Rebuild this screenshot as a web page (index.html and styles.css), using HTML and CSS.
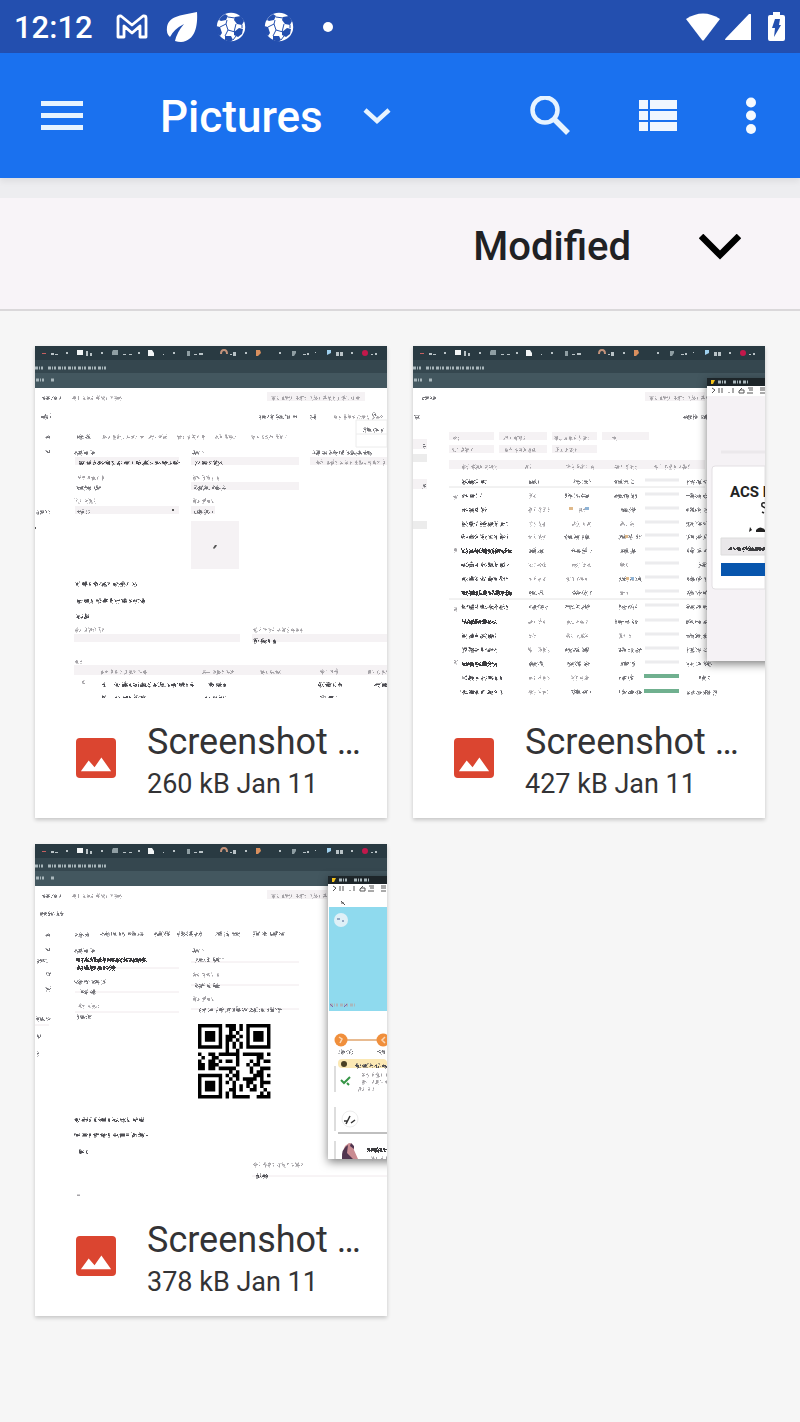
FILE: index.html
```html
<!DOCTYPE html>
<html lang="en">
<head>
    <meta charset="UTF-8">
    <meta name="viewport" content="width=device-width, initial-scale=1.0">
    <title>Pictures</title>
    <link rel="stylesheet" href="styles.css">
</head>
<body>
    <!-- Shared shapes -->
    <svg class="defs" aria-hidden="true">
        <filter id="scribble" filterUnits="userSpaceOnUse" x="0" y="0" width="352" height="352">
            <feTurbulence type="turbulence" baseFrequency="0.35" numOctaves="2" seed="4"/>
            <feDisplacementMap in="SourceGraphic" scale="4" xChannelSelector="R" yChannelSelector="G"/>
            <feOffset dx="1" dy="1"/>
        </filter>
        <symbol id="ball" viewBox="0 0 30 30">
            <circle cx="15" cy="15" r="14.2" fill="#fff"/>
            <g fill="#234faf" stroke="#234faf" stroke-width="1">
                <path stroke="none" d="M5 5l4-3 3 2-2 4-5 1-2-1zM19 5l6-1 3 5-2 4-5-1-3-4zM0 14l4 1 2 6-2 3-3-3zM18 20l5-4 4 1-1 5-4 3-4-2zM9 24l6 0 2 4-3 2-5-2z"/>
                <path fill="none" d="M11 8l-1 4-6 3M10 12l2 6 7 2M12 18l-3 6M20 12l-2 8M12 5l7 1M17 28l3-4M26 13l0 3"/>
            </g>
        </symbol>
        <symbol id="photo" viewBox="0 0 41 41">
            <rect width="41" height="41" rx="4" fill="#db4530"/>
            <path d="M5 34L13 23l6 7 7-10 10 14z" fill="#fff"/>
        </symbol>
        <symbol id="browser" viewBox="0 0 352 42">
            <rect width="352" height="42" fill="#43575f"/>
            <rect width="352" height="27" fill="#35474f"/>
            <rect width="352" height="14" fill="#293a42"/>
            <g fill="#b9c3c7">
                <path d="M16 7h3v2h-3zM20 8h3v1h-3zM31 6h2v2h-2zM51 5h2v5h-2zM55 7h2v3h-2zM66 6h2v2h-2zM88 8h3v1h-3zM94 8h3v1h-3zM103 6h2v2h-2zM128 8h1v1h-1zM138 6h2v2h-2zM159 8h3v1h-3zM164 7h4v2h-4zM195 8h2v1h-2zM198 6h3v4h-3zM210 6h2v2h-2zM244 6h2v2h-2zM268 8h3v1h-3zM272 7h2v2h-2zM280 6h1v1h-1zM301 6h3v4h-3zM305 6h3v4h-3zM316 6h2v2h-2zM336 8h2v1h-2zM340 7h2v2h-2z"/>
            </g>
            <path d="M42 4h6v5h-6zM113 4h4l2 3v3h-6z" fill="#f2f5f6"/>
            <path d="M78 4h5v5h-6v-3zM152 5h3v5h-3zM257 5h4v2l-2 3h-2z" fill="#8f9ea3"/>
            <path d="M186 8q0-4 3-4t3 4" fill="none" stroke="#c4937b" stroke-width="2"/>
            <path d="M221 4h4l1 3-3 3h-2z" fill="#d98f5e"/>
            <path d="M292 4h4v3l-4 2z" fill="#9fd0ee"/>
            <path d="M7 7h4v1h-4z" fill="#c66060"/>
            <circle cx="330" cy="7" r="3" fill="#c2184b"/>
            <path d="M0 22h8M13 22h58" class="pale"/>
            <path d="M1 34h9M16 34h4" class="pale"/>
        </symbol>
        <symbol id="phonebar" viewBox="0 0 60 18">
            <rect width="60" height="18" fill="#fff"/>
            <rect width="60" height="8" fill="#1d2529"/>
            <path d="M4 2h4l-2 4h-2z" fill="#f3c21b"/>
            <path d="M11 4h8M26 4h16" class="pale"/>
            <path d="M5 10l3 2-3 3M12 10v5M15 10v5M22 14v1M26 10v5M35 10l-3 3v2h5v-3h-4M41 10h5M42 12h4M40 15h6M53 10h5M53 12h5M53 15h5" fill="none" stroke="#555" stroke-width="1"/>
        </symbol>
    </svg>

    <header class="status-bar">
        <span class="clock">12:12</span>
        <div class="notices">
            <svg width="32" height="26" viewBox="0 0 32 26"><path d="M2 23V4q0-2 2-2h1l11 9 11-9h1q2 0 2 2v19h-6V12l-8 7-8-7v11z" fill="none" stroke="#fff" stroke-width="2.800" stroke-linejoin="round"/></svg>
            <svg width="32" height="32" viewBox="0 0 32 32"><path d="M31 1C32 15 29 30 15 31q-3 0-6-1 2-9 9-17Q8 18 4 26q-4-3-3-10C3 4 18 4 31 1z" fill="#fff"/></svg>
            <svg width="30" height="30"><use href="#ball"/></svg>
            <svg width="30" height="30"><use href="#ball"/></svg>
            <span class="more-dot"></span>
        </div>
        <div class="signals">
            <svg width="34" height="28" viewBox="0 0 34 28"><path d="M0 6Q17-5 34 6L18 27q-1 1-2 0z" fill="#fff"/></svg>
            <svg width="26" height="26" viewBox="0 0 26 26"><path d="M24 0q2-1 2 1v25H1q-2 0 0-2z" fill="#fff"/></svg>
            <svg class="battery" width="17" height="29" viewBox="0 0 17 29"><path d="M5 0h7v3h3q2 0 2 2v22q0 2-2 2H2q-2 0-2-2V5q0-2 2-2h3z" fill="#fff"/><path d="M7 7h5l-1 6h2L6 25l1-9H4z" fill="#234faf"/></svg>
        </div>
    </header>

    <nav class="toolbar">
        <button class="icon-btn" aria-label="Open menu">
            <svg width="42" height="30" viewBox="0 0 42 30"><path d="M0 2.500h42M0 14.500h42M0 26.500h42" stroke="#e6f3ff" stroke-width="5"/></svg>
        </button>
        <button class="folder">
            Pictures
            <svg width="28" height="18" viewBox="0 0 28 18"><path d="M2 2l12 11L26 2" fill="none" stroke="#e6f3ff" stroke-width="4.500"/></svg>
        </button>
        <div class="actions">
            <button class="icon-btn" aria-label="Search">
                <svg width="40" height="40" viewBox="0 0 40 40" fill="none" stroke="#e6f3ff"><circle cx="15" cy="14" r="12.500" stroke-width="4.500"/><path d="M24 23l14 14" stroke-width="5.500"/></svg>
            </button>
            <button class="icon-btn" aria-label="List view">
                <svg width="40" height="34" viewBox="0 0 40 34"><path d="M1 1h9v9H1zM12 1h27v9H12zM1 12h9v9H1zM12 12h27v9H12zM1 23h9v9H1zM12 23h27v9H12z" fill="#f0f7ff"/></svg>
            </button>
            <button class="icon-btn" aria-label="More options">
                <svg width="10" height="38" viewBox="0 0 10 38" fill="#f5faff"><circle cx="5" cy="5.500" r="5"/><circle cx="5" cy="18.500" r="5"/><circle cx="5" cy="32" r="5"/></svg>
            </button>
        </div>
    </nav>

    <div class="sort-bar">
        <button class="sort-by">Modified</button>
        <button class="icon-btn" aria-label="Sort descending">
            <svg width="42" height="26" viewBox="0 0 42 26"><path d="M2 2l19 19L40 2" fill="none" stroke="#000" stroke-width="6.500"/></svg>
        </button>
    </div>

    <main class="files">
        <a class="file" href="#file-1">
            <svg class="thumb" viewBox="0 0 352 352" aria-hidden="true">
                <rect width="352" height="352" fill="#fff"/>
                <use href="#browser" width="352" height="42"/>
                <g fill="#f5f2f4">
                    <path d="M232 46h98v9H232zM40 111h104v8H40zM156 111h108v8H156zM275 111h77v8H275zM156 136h108v8H156zM40 160h104v8H40zM156 160h24v8h-24zM156 175h48v48h-48zM39 288h166v8H39zM217 288h135v8H217zM39 319h313v10H39z"/>
                </g>
                <path d="M321 74h31v27h-31z" fill="#fff" stroke="#ececec"/>
                <path d="M321 88h31" stroke="#ececec"/>
                <g class="scribbles">
                    <path class="t-a" d="M6 50h18M4 69h11M9 89h4M9 104h4M39 89h14M38 105h20M156 105h10M0 164h12"/>
                    <path class="t-b" d="M36 50h50M66 89h40M112 89h18M141 89h28M178 89h24M215 89h35M41 130h28M156 130h26M38 153h22M156 153h20M235 50h88M38 282h29M217 282h48"/>
                    <path class="t-a" d="M222 69h38M273 69h6M335 66h4M327 82h20M276 105h58M40 140h24M158 140h30M40 164h12M158 164h18"/>
                    <path class="t-c" d="M42 115h100M158 115h28M38 236h62M40 253h68M40 269h13M217 293h22"/>
                    <path class="t-b" d="M280 115h70M38 314h10M64 324h46M166 324h30M224 324h22M284 324h18M331 324h20M45 334h4M297 69h52"/>
                    <path class="t-c" d="M66 337h2M78 337h80M172 337h18M282 337h22M338 337h13M66 350h2M78 350h32M168 350h20M284 350h18"/>
                </g>
                <path d="M178 202l2-3 2 0-1 2-2 2zM137 163h2v2h-2zM0 181h1v2H0z" fill="#555"/>
            </svg>
            <div class="info">
                <svg class="kind" width="40" height="40"><use href="#photo"/></svg>
                <div class="meta">
                    <span class="name">Screenshot …</span>
                    <span class="detail">260 kB Jan 11</span>
                </div>
            </div>
        </a>

        <a class="file" href="#file-2">
            <svg class="thumb" viewBox="0 0 352 352" aria-hidden="true">
                <rect width="352" height="352" fill="#fff"/>
                <use href="#browser" width="352" height="42"/>
                <g fill="#f5f2f4">
                    <path d="M232 46h60v9h-60zM36 86h45v8H36zM86 86h48v8H86zM139 86h45v8h-45zM189 86h47v8h-47zM36 99h45v8H36zM86 99h48v8H86zM139 99h45v8h-45zM36 114h256v9H36zM0 93h14v10H0zM0 133h14v10H0z"/>
                    <path d="M0 108h14v8H0zM0 175h14v8H0z" fill="#ececec"/>
                </g>
                <path d="M36 141h256M36 253h256" stroke="#e4e4e4"/>
                <path d="M232 134h34M232 148h34M232 162h34M232 176h34M232 189h34M232 203h34M232 217h34M232 231h34M232 245h34M232 259h34M232 274h34M232 288h34M232 302h34M232 316h34" stroke="#ececee" stroke-width="3"/>
                <path d="M231 330h35M231 345h35" stroke="#70b08f" stroke-width="4"/>
                <g class="scribbles">
                    <path class="t-a" d="M7 50h17M0 69h4M269 69h24M8 98h2M8 138h2"/>
                    <path class="t-b" d="M235 50h58M38 90h6M90 90h20M140 90h36M198 90h4M37 102h20M90 102h30M141 102h22M47 119h34M110 119h10M152 119h28M201 119h24M240 119h38M39 149h4M39 202h4M39 261h4M39 314h4"/>
                    <path class="t-c" d="M47 134h24M47 148h20M47 162h24M47 176h46M47 189h46M47 217h46M47 231h46M47 259h46M47 288h34M47 302h34M47 330h40M47 344h40"/>
                    <path class="t-d" d="M47 203h50M47 245h50M47 274h34M47 316h34"/>
                    <path class="t-a" d="M114 134h10M114 203h16M114 259h18M114 245h16M114 316h16M158 134h18M150 148h26M150 189h26M158 203h18M158 245h18M150 259h26M150 302h26M152 316h22M158 344h18"/>
                    <path class="t-b" d="M114 148h10M114 162h20M114 176h16M114 189h16M114 217h16M114 231h16M114 274h16M114 288h10M114 302h24M114 330h20M114 344h20M158 176h18M158 217h18M152 231h24M152 274h22M152 288h22M156 330h18"/>
                    <path class="t-a" d="M200 134h18M200 148h22M206 162h16M204 189h22M206 203h16M204 231h22M204 259h18M200 274h22M204 302h22M206 316h16M204 330h16M204 344h22"/>
                    <path class="t-b" d="M164 162h6M206 176h12M206 217h10M206 245h10M204 288h14"/>
                    <path class="t-a" d="M272 134h21M272 148h21M272 162h21M272 176h21M272 189h21M272 203h21M284 217h9M272 231h21M272 245h21M272 259h21M272 274h21M272 288h21M272 302h21M272 316h24M284 330h10M272 345h30"/>
                </g>
                <path d="M156 161h4v3h-4zM212 189h3v3h-3zM213 231h3v3h-3z" fill="#dfb98a"/>
                <path d="M172 161h4v3h-4zM218 231h3v3h-3z" fill="#8eb3d6"/>
                <g class="phone">
                    <rect x="294" y="32" width="68" height="283" fill="#f5f2f5"/>
                </g>
                <use href="#phonebar" x="294" y="32" width="60" height="18"/>
                <path d="M308 106h44" stroke="#ebe8eb" stroke-width="3"/>
                <path d="M352 120h-50q-3 0-3 3v117q0 3 3 3h50z" fill="#fff" stroke="#e3e0e3"/>
                <text class="acs" x="317" y="151">ACS D</text>
                <path d="M352 157q-4-1-3 3l3 2M351 167l-2-1" fill="none" stroke="#222" stroke-width="1.500"/>
                <path d="M337 181l2 3-3 2zM343 184q4-5 9 0v2h-9z" fill="#222"/>
                <path d="M308 192h44v17h-44z" fill="#e9e7e9" stroke="#ddd"/>
                <g class="scribbles">
                    <path class="t-d" d="M314 201h38"/>
                </g>
                <rect x="308" y="217" width="44" height="13" fill="#0755ad"/>
            </svg>
            <div class="info">
                <svg class="kind" width="40" height="40"><use href="#photo"/></svg>
                <div class="meta">
                    <span class="name">Screenshot …</span>
                    <span class="detail">427 kB Jan 11</span>
                </div>
            </div>
        </a>

        <a class="file" href="#file-3">
            <svg class="thumb" viewBox="0 0 352 352" aria-hidden="true">
                <rect width="352" height="352" fill="#fff"/>
                <use href="#browser" width="352" height="42"/>
                <path d="M232 46h60v9h-60z" fill="#f5f2f4"/>
                <path d="M40 124h104M40 148h104M40 168h104M156 118h108M156 141h108M156 165h108M217 332h135M0 181h14" stroke="#f0e9ec"/>
                <g class="scribbles">
                    <path class="t-a" d="M6 50h18M3 68h23M9 89h4M9 104h4M9 128h4M9 143h4M0 115h10M38 89h16M38 105h20M156 105h10M38 136h34"/>
                    <path class="t-b" d="M36 50h50M235 50h54M41 160h22M156 129h28M156 153h20M217 319h48M40 350h7"/>
                    <path class="t-a" d="M65 88h22M92 88h16M118 88h14M141 88h24M178 88h26M216 88h34M40 171h14M159 114h28M159 140h26M44 146h16M162 164h82"/>
                    <path class="t-d" d="M40 114h70M40 122h38"/>
                    <path class="t-a" d="M0 173h15M0 190h4M0 208h1"/>
                    <path class="t-c" d="M38 274h70M38 289h72M42 306h9M219 330h14"/>
                </g>
                <!-- 21 x 21 module code -->
                <g transform="translate(163 180) scale(3.450 3.550)">
                    <path d="M.5.5h6v6h-6zM14.500.5h6v6h-6zM.5 14.500h6v6h-6z" fill="none" stroke="#000"/>
                    <path d="M2 2h3v3H2zM16 2h3v3h-3zM2 16h3v3H2z"/>
                    <path stroke="#000" d="M8 .5h3m1 0h1M9 1.500h2m1 0h1M9 2.500h1m1 0h1M8 3.500h3m1 0h1M8 4.500h2m1 0h1M8 5.500h1m1 0h1m1 0h1M8 6.500h1m1 0h1m1 0h1M8 7.500h1m2 0h1M0 8.500h1m2 0h2m1 0h6m1 0h6m1 0h1M1 9.500h1m2 0h2m5 0h1m5 0h2M0 10.500h1m2 0h2m1 0h1m1 0h2m1 0h1m3 0h1m1 0h1m1 0h2M0 11.500h2m1 0h3m5 0h1m2 0h1m1 0h2M0 12.500h2m1 0h2m1 0h5m4 0h1m2 0h3M9 13.500h1m1 0h1m3 0h1m1 0h2M8 14.500h1m1 0h2m4 0h3m1 0h1M9 15.500h1m1 0h1m1 0h4m1 0h1M8 16.500h1m1 0h1m3 0h2m2 0h3M10 17.500h1m1 0h1m1 0h1m1 0h1m1 0h1M9 18.500h2m1 0h1m2 0h2m2 0h1M8 19.500h1m1 0h1m7 0h1m1 0h1M8 20.500h1m1 0h5m2 0h4"/>
                </g>
                <g class="phone">
                    <rect x="293" y="32" width="68" height="283" fill="#fff"/>
                </g>
                <use href="#phonebar" x="293" y="32" width="60" height="18"/>
                <path d="M306 57l4 4M306 59h3" stroke="#555"/>
                <rect x="294" y="63" width="58" height="104" fill="#8fdaee"/>
                <circle cx="306" cy="76" r="7" fill="#dff0f7"/>
                <path d="M302 75h3M307 77h2" stroke="#94a9c4" stroke-width="2"/>
                <path d="M295 161h26" class="pale"/>
                <path d="M295 160l3 3M309 163l3-3" stroke="#7666b0"/>
                <path d="M306 196h46" stroke="#e8bb91" stroke-width="2"/>
                <circle cx="306" cy="196" r="6.500" fill="#f08f3c"/>
                <circle cx="348" cy="196" r="6.500" fill="#f08f3c"/>
                <path d="M304 193l3 2-2 4M350 193l-3 3 3 3" fill="none" stroke="#fbd9b8" stroke-width="1.500"/>
                <rect x="303" y="215" width="49" height="9" rx="4" fill="#fbe8b4"/>
                <circle cx="309" cy="220" r="3" fill="#4a4025"/>
                <g class="scribbles">
                    <path class="t-a" d="M301 206h14M342 206h10"/>
                    <path class="t-c" d="M319 220h33"/>
                    <path class="t-b" d="M325 229h25M325 236h27M321 243h16M334 312h16"/>
                    <path class="t-d" d="M330 304h22"/>
                </g>
                <path d="M306 236l3 3 6-6M312 239l2 2" fill="none" stroke="#359545" stroke-width="2"/>
                <path d="M300 222v26M300 263v24M300 297v18" stroke="#bbb"/>
                <circle cx="315" cy="275" r="8" fill="#fff" stroke="#eee"/>
                <path d="M311 280l4-8M309 277h4M316 279l4-3" fill="none" stroke="#333" stroke-width="1.500"/>
                <path d="M303 289h49" stroke="#aaa" stroke-width="1.500"/>
                <path d="M309 315q-3-12 5-16 5 0 5 7l4 9z" fill="#c98c92"/>
                <path d="M307 315q-1-10 6-14l-1 8 6 6zM316 299l3 3v3l-4-3z" fill="#50354f"/>
            </svg>
            <div class="info">
                <svg class="kind" width="40" height="40"><use href="#photo"/></svg>
                <div class="meta">
                    <span class="name">Screenshot …</span>
                    <span class="detail">378 kB Jan 11</span>
                </div>
            </div>
        </a>
    </main>
</body>
</html>
```

FILE: styles.css
```css
* {
    box-sizing: border-box;
}
body {
    margin: 0;
    min-height: 100vh;
    background: #f6f6f6;
    color: #202124;
    font-family: Roboto, "Noto Sans", sans-serif;
}
button {
    border: none;
    padding: 0;
    background: none;
    color: inherit;
    font: inherit;
    cursor: pointer;
}
svg {
    display: block;
    flex: none;
}
.defs {
    position: absolute;
    width: 0;
    height: 0;
}

/* Status bar */
.status-bar {
    display: flex;
    align-items: center;
    height: 53px;
    padding: 0 15px 0 14px;
    background: #234faf;
    color: #fff;
}
.clock {
    padding-top: 2px;
    font-size: 31px;
    font-weight: 500;
}
.notices {
    display: flex;
    align-items: center;
    gap: 18px;
    margin-left: 23px;
}
.more-dot {
    width: 10px;
    height: 10px;
    margin-left: 11px;
    border-radius: 50%;
    background: #fff;
}
.signals {
    display: flex;
    align-items: center;
    gap: 5px;
    margin-left: auto;
}
.battery {
    margin-left: 12px;
}

/* Toolbar */
.toolbar {
    position: relative;
    display: flex;
    align-items: center;
    height: 125px;
    padding: 0 44px 0 41px;
    background: #1a71ef;
    color: #fff;
    box-shadow: 0 4px 6px rgba(0, 0, 0, 0.06), 0 20px 0 #ededf0;
}
.folder {
    display: flex;
    align-items: center;
    gap: 40px;
    margin-left: 77px;
    padding-top: 2px;
    font-size: 44px;
    font-weight: 500;
}
.actions {
    display: flex;
    align-items: center;
    gap: 68px;
    margin-left: auto;
}

/* Sort row */
.sort-bar {
    display: flex;
    align-items: center;
    justify-content: flex-end;
    gap: 68px;
    height: 133px;
    padding: 6px 59px 0 0;
    background: #f8f4f8;
    border-bottom: 2px solid #dad8da;
}
.sort-by {
    font-size: 40px;
    font-weight: 500;
}

/* File grid */
.files {
    display: grid;
    grid-template-columns: 1fr 1fr;
    gap: 26px;
    padding: 35px;
}
.file {
    min-width: 0;
    background: #fff;
    color: #333335;
    text-decoration: none;
    box-shadow: 0 2px 4px rgba(0, 0, 0, 0.2);
}
.thumb {
    width: 100%;
    height: auto;
}
.info {
    display: flex;
    align-items: center;
    gap: 31px;
    height: 120px;
    padding: 0 20px 0 41px;
}
.meta {
    min-width: 0;
    padding-top: 8px;
}
.name,
.detail {
    display: block;
    white-space: nowrap;
}
.name {
    font-size: 36px;
    line-height: 44px;
}
.detail {
    font-size: 27px;
    line-height: 40px;
}

/* Tiny unreadable lines inside the thumbnails */
.scribbles {
    filter: url(#scribble);
}
.t-a,
.t-b,
.t-c,
.t-d,
.pale {
    fill: none;
    stroke-width: 3;
}
.t-a {
    stroke: #77777c;
    stroke-dasharray: 2 1 4 2 1 1 3 3;
}
.t-b {
    stroke: #a6a4a8;
    stroke-dasharray: 3 2 1 4 2 2;
}
.t-c {
    stroke: #505054;
    stroke-dasharray: 3 1 1 2 5 2 2 3;
}
.t-d {
    stroke: #3c3c40;
    stroke-width: 4;
    stroke-dasharray: 3 1 2 1 5 1;
}
.pale {
    stroke: #a9b7bc;
    stroke-dasharray: 3 1 1 1 2 2;
}
.phone {
    filter: drop-shadow(0 3px 5px rgba(0, 0, 0, 0.5));
}
.acs {
    font-size: 15px;
    font-weight: 700;
    fill: #222;
}
```
